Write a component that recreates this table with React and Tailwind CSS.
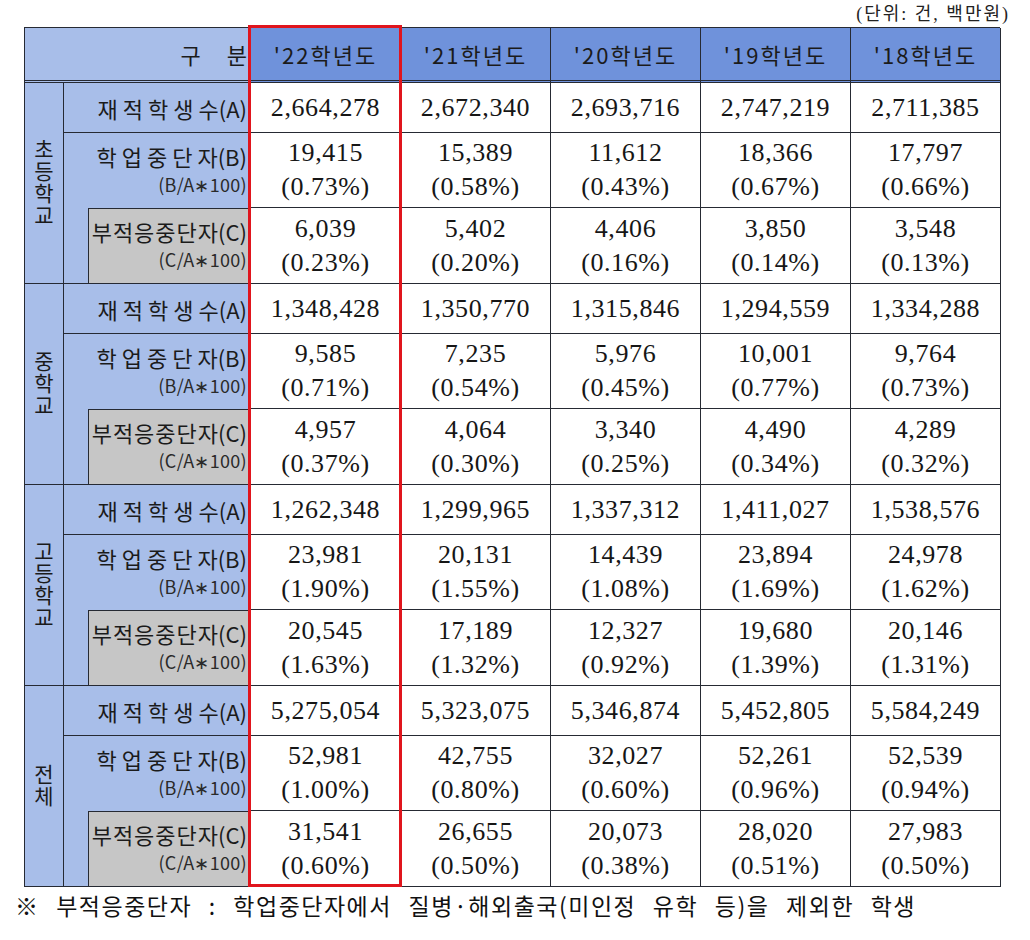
import React from "react";

const years = ["'22학년도", "'21학년도", "'20학년도", "'19학년도", "'18학년도"];

const groups = [
  {
    name: "초등학교",
    A: ["2,664,278", "2,672,340", "2,693,716", "2,747,219", "2,711,385"],
    B: [["19,415", "0.73%"], ["15,389", "0.58%"], ["11,612", "0.43%"], ["18,366", "0.67%"], ["17,797", "0.66%"]],
    C: [["6,039", "0.23%"], ["5,402", "0.20%"], ["4,406", "0.16%"], ["3,850", "0.14%"], ["3,548", "0.13%"]],
  },
  {
    name: "중학교",
    A: ["1,348,428", "1,350,770", "1,315,846", "1,294,559", "1,334,288"],
    B: [["9,585", "0.71%"], ["7,235", "0.54%"], ["5,976", "0.45%"], ["10,001", "0.77%"], ["9,764", "0.73%"]],
    C: [["4,957", "0.37%"], ["4,064", "0.30%"], ["3,340", "0.25%"], ["4,490", "0.34%"], ["4,289", "0.32%"]],
  },
  {
    name: "고등학교",
    A: ["1,262,348", "1,299,965", "1,337,312", "1,411,027", "1,538,576"],
    B: [["23,981", "1.90%"], ["20,131", "1.55%"], ["14,439", "1.08%"], ["23,894", "1.69%"], ["24,978", "1.62%"]],
    C: [["20,545", "1.63%"], ["17,189", "1.32%"], ["12,327", "0.92%"], ["19,680", "1.39%"], ["20,146", "1.31%"]],
  },
  {
    name: "전체",
    A: ["5,275,054", "5,323,075", "5,346,874", "5,452,805", "5,584,249"],
    B: [["52,981", "1.00%"], ["42,755", "0.80%"], ["32,027", "0.60%"], ["52,261", "0.96%"], ["52,539", "0.94%"]],
    C: [["31,541", "0.60%"], ["26,655", "0.50%"], ["20,073", "0.38%"], ["28,020", "0.51%"], ["27,983", "0.50%"]],
  },
];

const sans = "font-['Noto_Sans_CJK_KR','Noto_Sans',sans-serif]";
const serif = "font-['Liberation_Serif','Noto_Sans_CJK_KR',serif]";
const line = "border-[#262a33]";

function DataOne({ v }) {
  return (
    <div className={`flex items-center justify-center border-r border-b ${line} bg-white ${serif} text-[26px] tracking-[0.6px] text-[#161616]`}>
      {v}
    </div>
  );
}

function DataTwo({ v }) {
  return (
    <div className={`flex flex-col items-center justify-center border-r border-b ${line} bg-white ${serif} text-[26px] leading-[34px] tracking-[0.6px] text-[#161616]`}>
      <span>{v[0]}</span>
      <span>({v[1]})</span>
    </div>
  );
}

export default function App() {
  return (
    <div className="w-[1030px] h-[940px] bg-white text-[#1b1b1b]">
      <div className={`h-[27px] flex items-center justify-end pr-[20px] pt-[2px] ${serif} text-[18px] tracking-[2px] text-[#222]`}>
        (단위: 건, 백만원)
      </div>
      <div className="relative ml-[24px] w-[976px]">
        <div className={`grid grid-cols-[39px_24px_163px_repeat(5,150px)] grid-rows-[55px_repeat(4,50px_75px_76px)] border-l border-t ${line}`}>
          <div className={`col-span-3 flex items-center justify-end pr-[3px] bg-[#a8bee9] border-r border-b-[3px] border-double ${line} ${sans} text-[22px]`}>
            <span>구</span>
            <span className="ml-[26px]">분</span>
          </div>
          {years.map((y) => (
            <div key={y} className={`flex items-center justify-center bg-[#6f92db] border-r border-b-[3px] border-double ${line} ${sans} text-[22px] tracking-[2px]`}>
              {y}
            </div>
          ))}
          {groups.map((g, gi) => (
            <React.Fragment key={gi}>
              <div className={`row-span-3 flex items-center justify-center bg-[#a8bee9] border-r border-b ${line} ${sans} text-[21px]`}>
                <span className="[writing-mode:vertical-rl] [text-orientation:upright] tracking-[1px] leading-[24px]">{g.name}</span>
              </div>
              <div className={`col-span-2 flex items-center justify-end pr-[3px] bg-[#a8bee9] border-r border-b ${line} ${sans} text-[22px] leading-[26px]`}>
                <span className="tracking-[5px]">재적학생</span>
                <span>수(A)</span>
              </div>
              {g.A.map((v, i) => (
                <DataOne key={i} v={v} />
              ))}
              <div className={`col-span-2 flex flex-col items-end justify-center pr-[3px] pb-[4px] bg-[#a8bee9] border-r ${line} ${sans}`}>
                <div className="text-[22px] leading-[30px]">
                  <span className="tracking-[5px]">학업중단</span>
                  <span>자(B)</span>
                </div>
                <div className="text-[18px] leading-[26px] tracking-[0.3px] text-[#2a2a2a]">(B/A∗100)</div>
              </div>
              {g.B.map((v, i) => (
                <DataTwo key={i} v={v} />
              ))}
              <div className={`bg-[#a8bee9] border-b ${line}`}></div>
              <div className={`flex flex-col items-end justify-center pr-[3px] pb-[4px] bg-[#c6c6c6] border-l border-t border-r border-b ${line} ${sans}`}>
                <div className="text-[22px] leading-[30px]">
                  <span className="tracking-[1px]">부적응중단</span>
                  <span>자(C)</span>
                </div>
                <div className="text-[18px] leading-[26px] tracking-[0.3px] text-[#2a2a2a]">(C/A∗100)</div>
              </div>
              {g.C.map((v, i) => (
                <DataTwo key={i} v={v} />
              ))}
            </React.Fragment>
          ))}
        </div>
        <div className="absolute left-[224px] top-[-2px] w-[154px] h-[862px] border-[3px] border-[#e0151d] pointer-events-none"></div>
      </div>
      <div className={`pl-[15px] pt-[3px] ${sans} text-[23px] leading-[30px] tracking-[1.5px] [word-spacing:10px] text-[#111]`}>
        ※ 부적응중단자 : 학업중단자에서 질병·해외출국(미인정 유학 등)을 제외한 학생
      </div>
    </div>
  );
}
